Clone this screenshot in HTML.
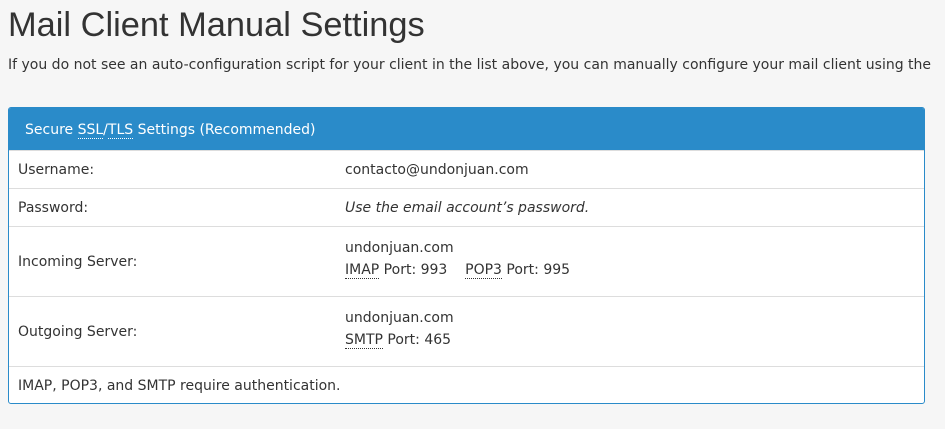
<!DOCTYPE html><html><head><style>
body{margin:0;background:#f6f6f6;font-family:"DejaVu Sans",sans-serif;color:#333;width:945px;height:429px;overflow:hidden;position:relative}
h1{position:absolute;left:8px;top:0;margin:0;font-weight:normal;font-size:34.4px;line-height:50px;color:#333;white-space:nowrap;font-family:"Liberation Sans",sans-serif}
p.s{position:absolute;left:8px;top:55px;margin:0;font-size:14px;white-space:nowrap;line-height:20px}
.panel{position:absolute;left:8px;top:107px;width:915px;height:295px;border:1px solid #2a8bc9;border-radius:3px;background:#fff;overflow:hidden}
.hd{background:#2a8bc9;color:#fff;height:42px;line-height:44px;padding-left:16px;font-size:14px}
abbr{text-decoration:none;border-bottom:1px dotted currentColor}
.r{position:relative;border-top:1px solid #ddd;font-size:14px}
.l{position:absolute;left:9px}
.v{position:absolute;left:336px}
</style></head><body>
<h1>Mail Client Manual Settings</h1>
<p class="s">If you do not see an auto-configuration script for your client in the list above, you can manually configure your mail client using the</p>
<div class="panel">
<div class="hd">Secure <abbr>SSL</abbr>/<abbr>TLS</abbr> Settings (Recommended)</div>
<div class="r" style="height:37px"><span class="l" style="top:11px">Username:</span><span class="v" style="top:11px">contacto@undonjuan.com</span></div>
<div class="r" style="height:37px"><span class="l" style="top:11px">Password:</span><span class="v" style="top:11px;font-style:italic">Use the email account’s password.</span></div>
<div class="r" style="height:69px"><span class="l" style="top:27px">Incoming Server:</span><span class="v" style="top:10px;line-height:22px">undonjuan.com<br><abbr>IMAP</abbr> Port: 993 &nbsp;&nbsp; <abbr>POP3</abbr> Port: 995</span></div>
<div class="r" style="height:69px"><span class="l" style="top:27px">Outgoing Server:</span><span class="v" style="top:10px;line-height:22px">undonjuan.com<br><abbr>SMTP</abbr> Port: 465</span></div>
<div class="r" style="height:37px"><span class="l" style="top:11px">IMAP, POP3, and SMTP require authentication.</span></div>
</div>
</body></html>
